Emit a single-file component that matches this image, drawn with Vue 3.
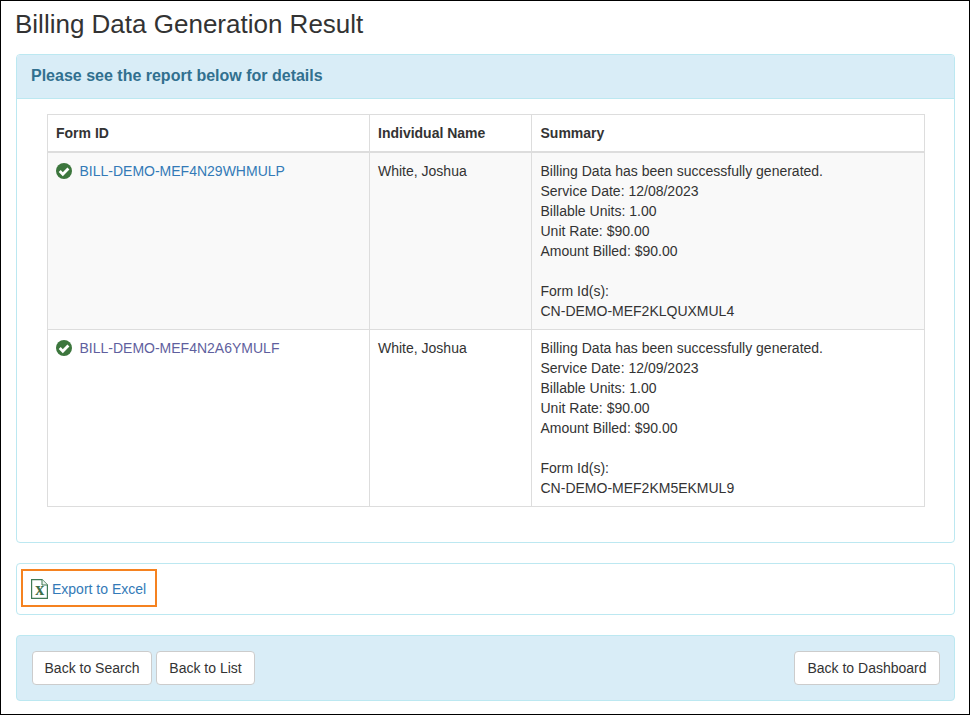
<template>
  <div class="page">
    <h1>Billing Data Generation Result</h1>

    <section class="panel">
      <div class="panel-heading">Please see the report below for details</div>
      <div class="panel-body">
        <table>
          <colgroup>
            <col class="col-form" />
            <col class="col-name" />
            <col />
          </colgroup>
          <thead>
            <tr>
              <th>Form ID</th>
              <th>Individual Name</th>
              <th class="summary">Summary</th>
            </tr>
          </thead>
          <tbody>
            <tr v-for="row in rows" :key="row.id">
              <td>
                <div class="form-id">
                  <svg class="check" viewBox="0 0 16 16" aria-hidden="true">
                    <circle cx="8" cy="8" r="8" fill="#3c763d" />
                    <path d="M3.7 8.1 6.8 11.2 12.4 5.5" fill="none" stroke="#fff" stroke-width="2.8" />
                  </svg>
                  <a href="#" :class="{ visited: row.visited }">{{ row.id }}</a>
                </div>
              </td>
              <td>White, Joshua</td>
              <td class="summary">
                Billing Data has been successfully generated.<br />
                Service Date: {{ row.date }}<br />
                Billable Units: 1.00<br />
                Unit Rate: $90.00<br />
                Amount Billed: $90.00<br />
                <br />
                Form Id(s):<br />
                {{ row.source }}
              </td>
            </tr>
          </tbody>
        </table>
      </div>
    </section>

    <section class="export-panel">
      <a href="#" class="export-link">
        <svg class="excel" viewBox="0 0 17 20" aria-hidden="true">
          <path d="M.6.6H11L16.4 6V19.4H.6Z" fill="#fff" stroke="#3f7a55" stroke-width="1.2" />
          <path d="M11 .6V6H16.4" fill="#eef4ee" stroke="#3f7a55" />
          <text x="8.8" y="16" text-anchor="middle" class="excel-x">x</text>
        </svg>
        <span>Export to Excel</span>
      </a>
    </section>

    <section class="actions">
      <div class="actions-left">
        <button type="button" class="btn-search">Back to Search</button>
        <button type="button" class="btn-list">Back to List</button>
      </div>
      <button type="button" class="btn-dashboard">Back to Dashboard</button>
    </section>
  </div>
</template>

<script setup>
const rows = [
  { id: 'BILL-DEMO-MEF4N29WHMULP', date: '12/08/2023', source: 'CN-DEMO-MEF2KLQUXMUL4', visited: false },
  { id: 'BILL-DEMO-MEF4N2A6YMULF', date: '12/09/2023', source: 'CN-DEMO-MEF2KM5EKMUL9', visited: true }
]
</script>

<style scoped>
.page {
  box-sizing: border-box;
  width: 970px;
  height: 715px;
  padding: 0 14px 0 15px;
  border: 1px solid #000;
  background: #fff;
  color: #333;
  font-family: "Liberation Sans", Arial, sans-serif;
  font-size: 14px;
  line-height: 20px;
}

h1 {
  margin: 0 0 0 -1px;
  padding: 9px 0 16px;
  font-size: 26px;
  font-weight: 400;
  line-height: 28px;
}

.panel,
.export-panel {
  border: 1px solid #bce8f1;
  border-radius: 4px;
  background: #fff;
}

.panel-heading {
  padding: 11px 15px 12px 14px;
  background: #d9edf7;
  border-bottom: 1px solid #bce8f1;
  border-radius: 3px 3px 0 0;
  color: #31708f;
  font-size: 16px;
  font-weight: 700;
  line-height: 20px;
}

.panel-body {
  padding: 15px 30px 35px;
}

table {
  width: 878px;
  border-collapse: collapse;
  table-layout: fixed;
}

.col-form {
  width: 322px;
}

.col-name {
  width: 162px;
}

th,
td {
  padding: 8px;
  border: 1px solid #ddd;
  text-align: left;
  vertical-align: top;
}

th {
  border-bottom-width: 2px;
  font-weight: 700;
}

th.summary,
td.summary {
  padding-left: 8.5px;
}

tbody tr:nth-child(odd) td {
  background: #f9f9f9;
}

.form-id {
  display: flex;
  align-items: center;
  gap: 7.5px;
}

.check {
  width: 16px;
  height: 16px;
  flex: none;
}

a {
  color: #337ab7;
  text-decoration: none;
}

a.visited {
  color: #5f5f9e;
}

.export-panel {
  margin-top: 20px;
  padding: 5px 4px;
  height: 52px;
  box-sizing: border-box;
}

.export-link {
  display: inline-flex;
  align-items: center;
  gap: 4px;
  height: 38px;
  box-sizing: border-box;
  padding: 1px 9px 0 8px;
  border: 2px solid #f58220;
}

.excel {
  width: 17px;
  height: 20px;
  flex: none;
}

.excel-x {
  fill: #3f7049;
  font-family: "Liberation Serif", serif;
  font-size: 18px;
  font-weight: 700;
}

.actions {
  display: flex;
  justify-content: space-between;
  align-items: center;
  margin-top: 20px;
  height: 66px;
  box-sizing: border-box;
  padding: 0 14px 0 15px;
  background: #d9edf7;
  border: 1px solid #bce8f1;
  border-radius: 4px;
}

.actions-left {
  display: flex;
  gap: 4px;
}

button {
  height: 34px;
  padding: 6px 0;
  border: 1px solid #ccc;
  border-radius: 4px;
  background: #fff;
  color: #333;
  font-family: inherit;
  font-size: 14px;
  line-height: 20px;
}

.btn-search {
  width: 120px;
}

.btn-list {
  width: 99px;
}

.btn-dashboard {
  width: 146px;
}
</style>
